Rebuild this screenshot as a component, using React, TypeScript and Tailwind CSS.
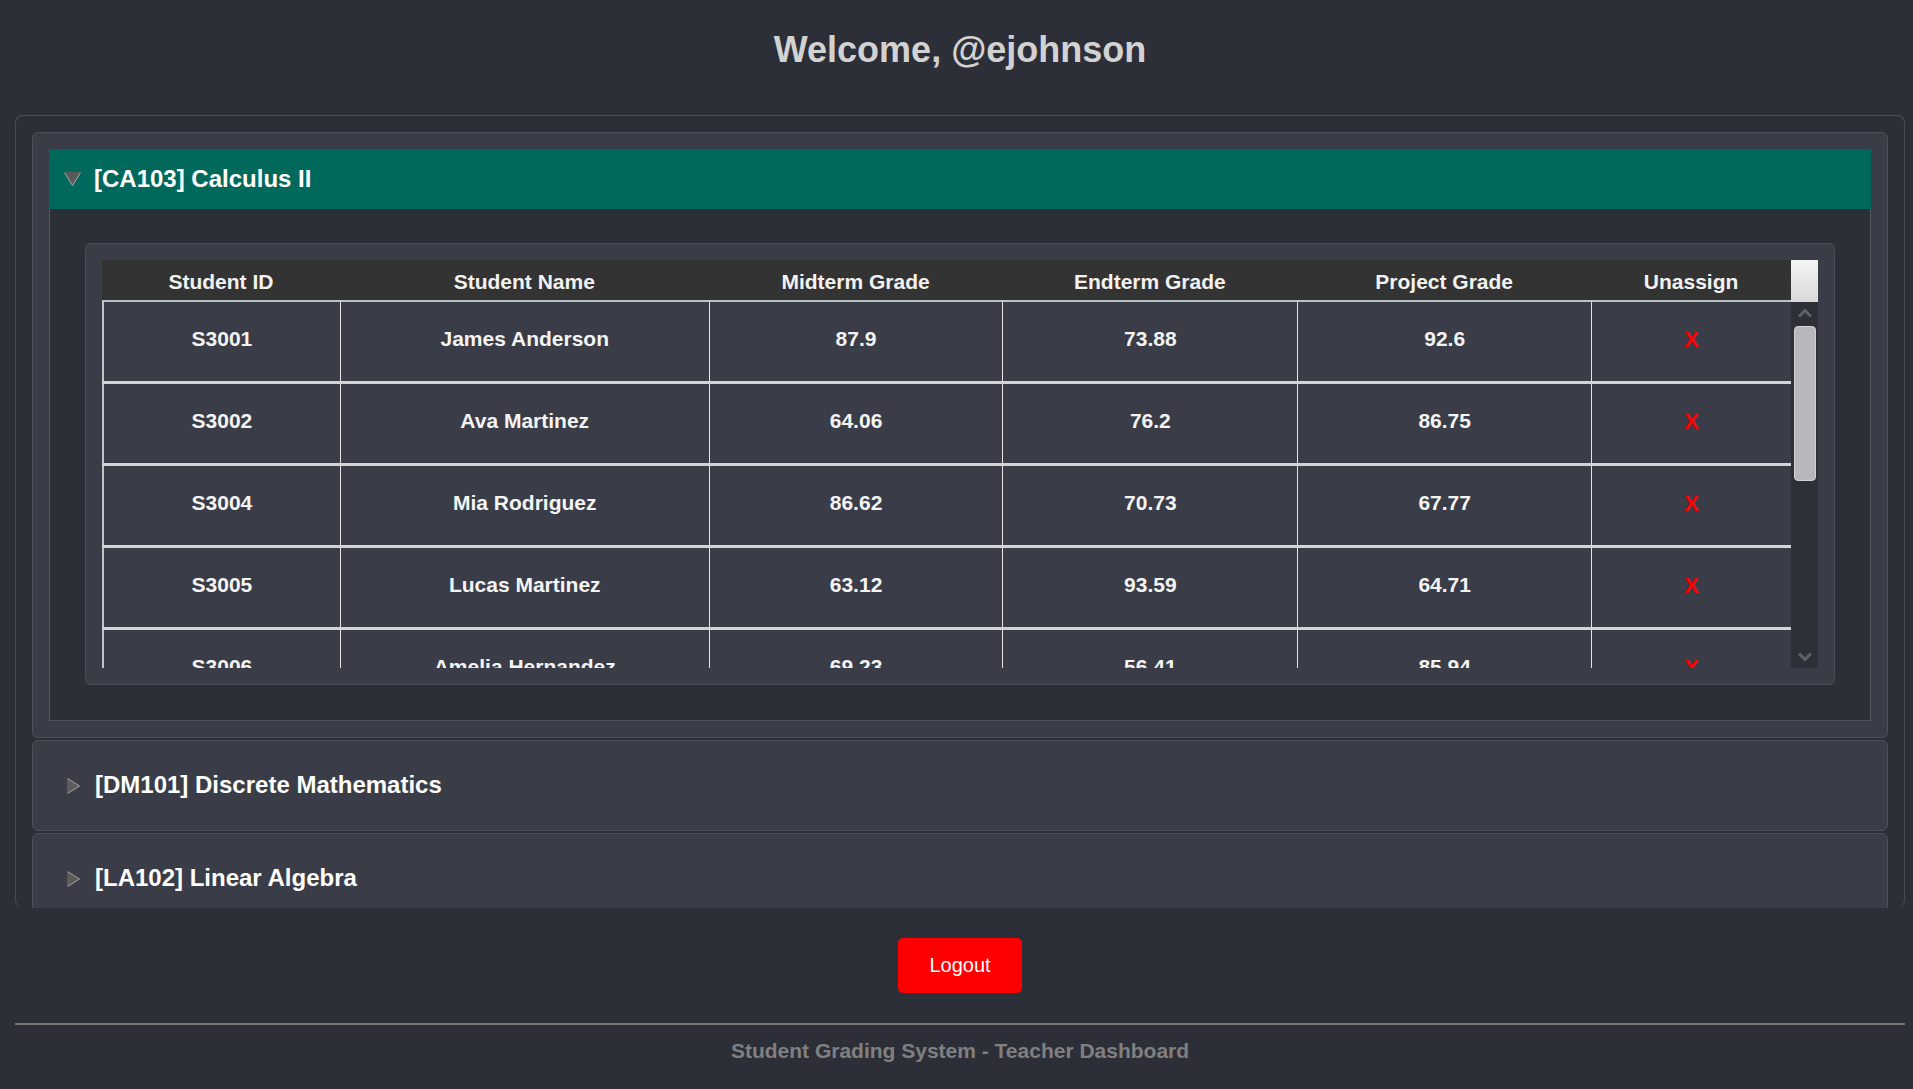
import React from "react";

const rows = [
  { id: "S3001", name: "James Anderson", mid: "87.9", end: "73.88", proj: "92.6" },
  { id: "S3002", name: "Ava Martinez", mid: "64.06", end: "76.2", proj: "86.75" },
  { id: "S3004", name: "Mia Rodriguez", mid: "86.62", end: "70.73", proj: "67.77" },
  { id: "S3005", name: "Lucas Martinez", mid: "63.12", end: "93.59", proj: "64.71" },
  { id: "S3006", name: "Amelia Hernandez", mid: "69.23", end: "56.41", proj: "85.94" },
  { id: "S3007", name: "Ethan Wilson", mid: "78.45", end: "81.1", proj: "90.2" },
];

const cols = "grid grid-cols-[238fr_369fr_294fr_295fr_294fr_200fr]";

const OpenMarker = () => (
  <svg width="17" height="14" viewBox="0 0 17 14">
    <polygon points="0.5,0.5 16.5,0.5 8.5,13.5" fill="#595959" />
    <polyline points="0.5,0.5 8.5,13.5 16.5,0.5" fill="none" stroke="#a9a9a9" strokeWidth="1" />
    <line x1="0.5" y1="0.5" x2="16.5" y2="0.5" stroke="#595959" strokeWidth="1" />
  </svg>
);

const ClosedMarker = () => (
  <svg width="13" height="16" viewBox="0 0 13 16">
    <polygon points="0.5,0.5 12.5,8 0.5,15.5" fill="#5b5b5b" />
    <polyline points="0.5,0.5 12.5,8 0.5,15.5" fill="none" stroke="#a4a4a4" strokeWidth="1" />
    <line x1="0.5" y1="0.5" x2="0.5" y2="15.5" stroke="#5b5b5b" strokeWidth="1" />
  </svg>
);

const Chevron = ({ up }: { up?: boolean }) => (
  <svg width="16" height="10" viewBox="0 0 16 10">
    <path
      d={up ? "M2 8.5L8 2.5L14 8.5" : "M2 1.5L8 7.5L14 1.5"}
      fill="none"
      stroke="#5e616a"
      strokeWidth="3"
    />
  </svg>
);

const ClosedCourse = ({ title }: { title: string }) => (
  <div className="mt-[2px] shrink-0 rounded-[6px] border border-[#4d5058] bg-[#3a3d47] p-[16px]">
    <div className="flex h-[57px] items-center pl-[18px]">
      <ClosedMarker />
      <span className="ml-[15px] pb-[2px] text-[24px] font-bold text-white">{title}</span>
    </div>
  </div>
);

export default function App() {
  return (
    <div
      className="min-h-screen bg-[#2d2f38] pl-[15px] pr-[8px]"
      style={{ fontFamily: '"Liberation Sans", Arial, sans-serif' }}
    >
      {/* Title */}
      <h1 className="pt-[29px] text-center text-[36px] font-bold leading-[41px] text-[#d2d2d2]">
        Welcome, @ejohnson
      </h1>

      {/* Courses */}
      <div className="mt-[45px] flex h-[793px] flex-col overflow-hidden rounded-[8px] border border-b-0 border-[#4a4c54] p-[16px] pb-0">
        <div className="shrink-0 rounded-[6px] border border-[#4d5058] bg-[#3a3d47] p-[16px]">
          <div className="flex h-[60px] items-center bg-[#00695c] pl-[15px]">
            <OpenMarker />
            <span className="ml-[13px] text-[24px] font-bold text-white">[CA103] Calculus II</span>
          </div>

          <div className="border-x border-b border-[#50535b] bg-[#2d2f38] px-[35px] pb-[35px] pt-[34px]">
            <div className="rounded-[6px] border border-[#4a4d55] bg-[#3a3d47] p-[16px]">
              <div className="flex h-[408px]">
                <div className="flex min-w-0 flex-1 flex-col">
                  {/* Header */}
                  <div className={`${cols} h-[42px] shrink-0 border-b-2 border-[#b9c5c5] bg-[#333333] pt-[4px]`}>
                    {["Student ID", "Student Name", "Midterm Grade", "Endterm Grade", "Project Grade", "Unassign"].map((h) => (
                      <div key={h} className="flex items-center justify-center text-[21px] font-bold text-[#f2f2f2]">
                        {h}
                      </div>
                    ))}
                  </div>

                  {/* Body */}
                  <div className="flex-1 overflow-hidden">
                    {rows.map((r) => (
                      <div key={r.id} className={`${cols} h-[82px] border-b-[3px] border-[#d3d5d5] text-[21px] font-bold text-[#f4f4f4]`}>
                        <div className="flex items-center justify-center border-l-2 border-[#bcc6c6] pb-[5px]">{r.id}</div>
                        <div className="flex items-center justify-center border-l border-[#e4e4e4] pb-[5px]">{r.name}</div>
                        <div className="flex items-center justify-center border-l border-[#e4e4e4] pb-[5px]">{r.mid}</div>
                        <div className="flex items-center justify-center border-l border-[#e4e4e4] pb-[5px]">{r.end}</div>
                        <div className="flex items-center justify-center border-l border-[#e4e4e4] pb-[5px]">{r.proj}</div>
                        <div className="flex items-center justify-center border-l border-[#e4e4e4] pb-[5px] text-[22px] text-[#ff0000]">X</div>
                      </div>
                    ))}
                  </div>
                </div>

                {/* Scrollbar */}
                <div className="flex w-[27px] shrink-0 flex-col">
                  <div className="h-[42px] shrink-0 bg-gradient-to-b from-[#f4f4f4] to-[#d9d9d9]" />
                  <div className="flex flex-1 flex-col items-center bg-[#2e3038]">
                    <div className="flex h-[22px] items-center justify-center">
                      <Chevron up />
                    </div>
                    <div className="mt-[2px] h-[155px] w-[22px] rounded-[4px] border border-[#d0d1d4] bg-[#b7b8bc]" />
                    <div className="flex-1" />
                    <div className="flex h-[20px] items-center justify-center pb-[3px]">
                      <Chevron />
                    </div>
                  </div>
                </div>
              </div>
            </div>
          </div>
        </div>

        <ClosedCourse title="[DM101] Discrete Mathematics" />
        <ClosedCourse title="[LA102] Linear Algebra" />
      </div>

      {/* Logout */}
      <div className="mt-[30px] flex justify-center">
        <button className="rounded-[5px] bg-[#ff0000] px-[31px] py-[16px] text-[20px] leading-[23px] text-white">
          Logout
        </button>
      </div>

      {/* Footer */}
      <footer className="mt-[30px] border-t-2 border-[#737373] pb-[20px] pt-[14px] text-center text-[21px] font-bold leading-[24px] text-[#808080]">
        Student Grading System - Teacher Dashboard
      </footer>
    </div>
  );
}
